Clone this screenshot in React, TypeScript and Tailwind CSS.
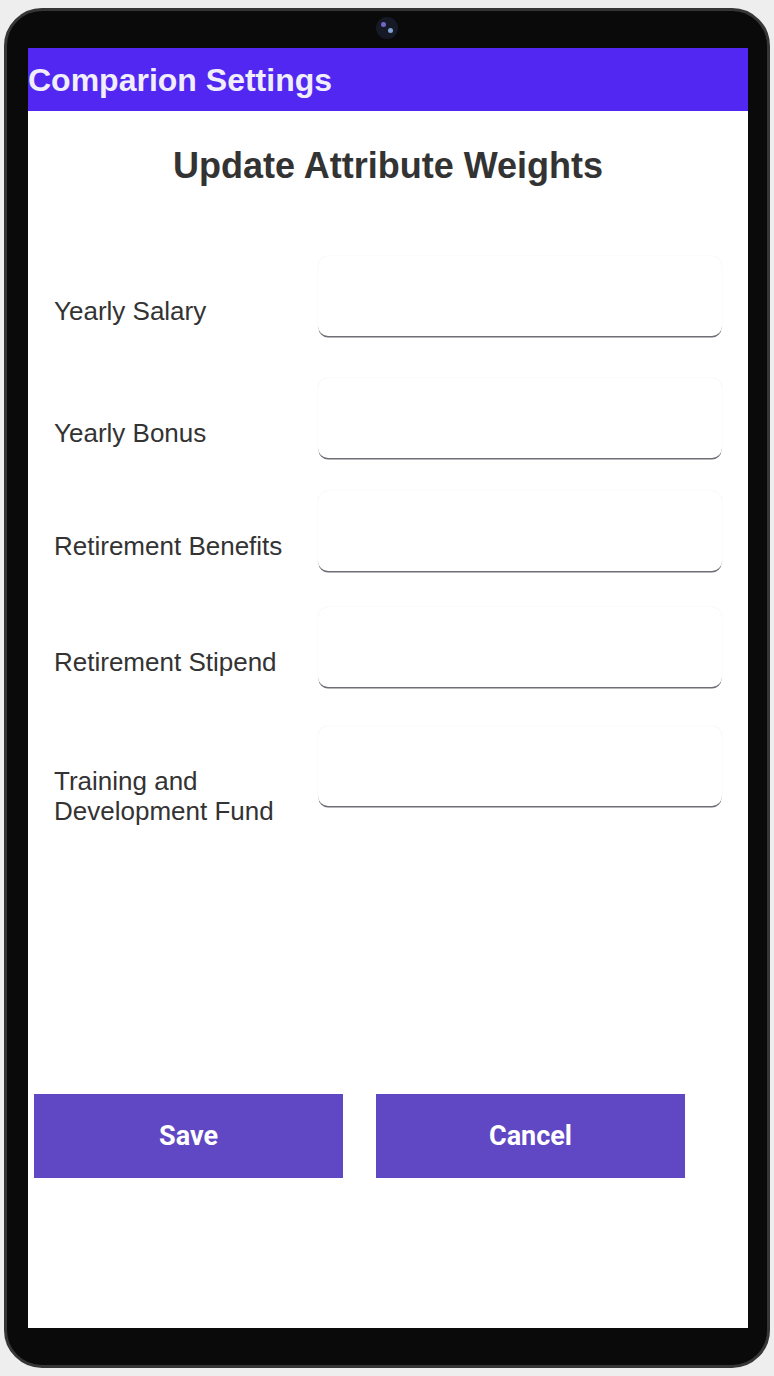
import React from "react";

const fields = [
  { label: "Yearly Salary", gap: "mt-[69px]" },
  { label: "Yearly Bonus", gap: "mt-[42px]" },
  { label: "Retirement Benefits", gap: "mt-[33px]" },
  { label: "Retirement Stipend", gap: "mt-[36px]" },
  { label: "Training and Development Fund", gap: "mt-[39px]" },
];

const Camera = () => (
  <div className="relative w-[22px] h-[22px] rounded-full bg-[#161a26]">
    <span className="absolute left-[5px] top-[5px] w-[5px] h-[5px] rounded-full bg-[#7466c8]" />
    <span className="absolute left-[12px] top-[11px] w-[5px] h-[5px] rounded-full bg-[#7fa3d2]" />
  </div>
);

const FieldRow = ({ label, gap }: { label: string; gap: string }) => (
  <div className={`flex items-start ${gap}`}>
    <div className="w-[290px] pl-[26px] pr-[26px] pt-[40px] text-[26px] leading-[30px] text-[#333]">
      {label}
    </div>
    <input
      className="w-[404px] h-[80px] rounded-[10px] bg-white outline-none shadow-[0_2px_0.5px_-0.5px_#6f6e76,0_0_1px_rgba(0,0,0,0.12)]"
      type="text"
    />
  </div>
);

export default function App() {
  return (
    <div className="w-[774px] h-[1376px] bg-[#eeeeee] pt-[8px] px-[4px] font-['Liberation_Sans',Arial,sans-serif]">
      <div className="w-[766px] h-[1360px] rounded-[38px] border-[3px] border-[#363636] bg-[#0a0a0a] px-[21px]">
        <div className="h-[37px] flex justify-center pt-[6px]">
          <Camera />
        </div>
        <div className="w-[720px] h-[1280px] bg-white flex flex-col">
          <div className="h-[63px] bg-[#5227f2] flex items-center">
            <span className="text-[32px] font-bold text-[#f1eefb] leading-none">Comparion Settings</span>
          </div>
          <h1 className="mt-[33px] text-center text-[36px] leading-[43px] font-bold text-[#333]">
            Update Attribute Weights
          </h1>
          {fields.map((f) => (
            <FieldRow key={f.label} label={f.label} gap={f.gap} />
          ))}
          <div className="mt-[268px] pl-[6px] flex gap-[33px]">
            {["Save", "Cancel"].map((t) => (
              <button
                key={t}
                className="w-[309px] h-[84px] bg-[#6047c4] text-white text-[27px] font-bold font-['Roboto',sans-serif]"
              >
                {t}
              </button>
            ))}
          </div>
        </div>
      </div>
    </div>
  );
}
